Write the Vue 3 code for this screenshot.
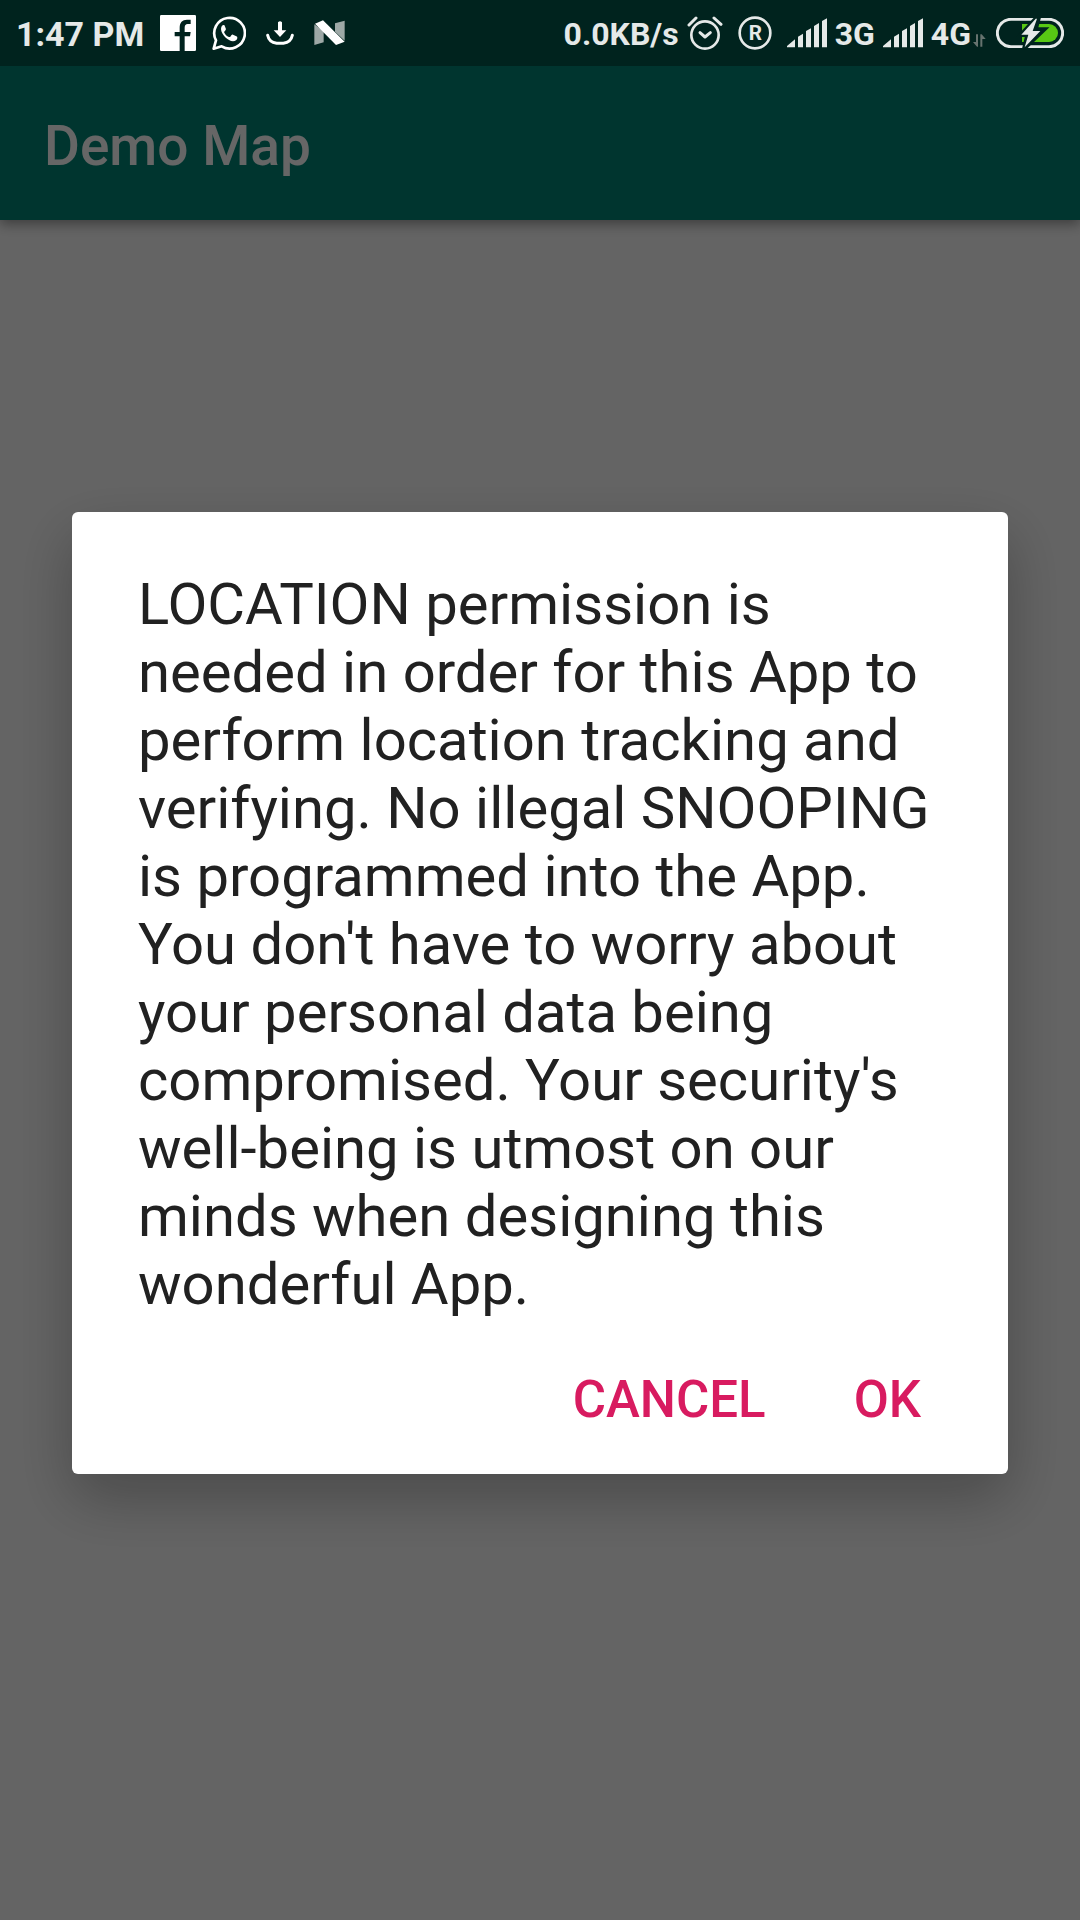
<script setup>
import { ref } from 'vue'

const open = ref(true)
const message =
  "LOCATION permission is needed in order for this App to perform location tracking and verifying. No illegal SNOOPING is programmed into the App. You don't have to worry about your personal data being compromised. Your security's well-being is utmost on our minds when designing this wonderful App."
const networks = [
  { name: '3G', active: false },
  { name: '4G', active: true },
]
</script>

<template>
  <div class="screen">
    <div class="status-bar">
      <div class="status-group notifications">
        <span class="clock">1:47 PM</span>
        <svg class="facebook" width="36" height="36" viewBox="0 0 108 108" aria-label="Facebook">
          <rect width="108" height="108" rx="4" fill="#fff" />
          <path d="M59 108V64H44V51H59V38C59 22 67 14 81 14H92V27H83C77 27 74 31 74 38V51H92L90 64H74V108Z" fill="#00231e" />
        </svg>
        <svg class="whatsapp" width="34" height="34" viewBox="0 0 102 102" aria-label="WhatsApp">
          <path d="M5 98L12 73A46 46 0 1 1 29 91Z" fill="none" stroke="#fff" stroke-width="8" stroke-linejoin="round" />
          <path d="M35 27C31 27 27 32 27 39C28 56 48 75 63 76C70 76 76 71 76 66C76 63 75 62 73 61L63 56C61 55 60 56 58 58L55 62C53 64 51 63 49 62C43 59 39 54 37 50C36 48 37 47 38 46L41 42C42 40 42 39 41 37L38 29C37 27 36 27 35 27Z" fill="#fff" />
        </svg>
        <svg class="download" width="28" height="26" viewBox="0 0 84 78" aria-label="Download">
          <path d="M36 7Q42 0 48 7V31H61L42 51L23 31H36Z" fill="#fff" />
          <path d="M5 46Q9 67 32 70H52Q75 67 79 46" fill="none" stroke="#fff" stroke-width="9" stroke-linecap="round" />
        </svg>
        <svg class="nougat" width="31" height="26" viewBox="0 0 93 78" aria-label="Android N">
          <path d="M1 13L29 34V67L1 75Z M63 10L92 2V62L63 35Z" fill="#9da8a6" />
          <path d="M3 11L27 1L92 65L66 75Z" fill="#fff" />
        </svg>
      </div>

      <div class="status-group system">
        <span class="speed">0.0KB/s</span>
        <svg class="alarm" width="36" height="36" viewBox="0 0 108 108" aria-label="Alarm">
          <g fill="none" stroke="#e5e9e8" stroke-linecap="round" stroke-linejoin="round">
            <circle cx="54" cy="60" r="41" stroke-width="8" />
            <path d="M39 53L54 66L70 53" stroke-width="9" />
            <path d="M6 30L27 9M81 9L102 28" stroke-width="9" />
          </g>
        </svg>
        <svg class="registered" width="34" height="34" viewBox="0 0 102 102" aria-label="Roaming">
          <circle cx="51" cy="51" r="46" fill="none" stroke="#e5e9e8" stroke-width="8" />
          <text x="52" y="73" text-anchor="middle" font-size="62" font-weight="700" fill="#e5e9e8">R</text>
        </svg>
        <template v-for="network in networks" :key="network.name">
          <svg class="signal" width="40" height="30" viewBox="0 0 120 90" aria-label="Signal">
            <path d="M0 88V84L24 64V88ZM33 88V56L48 47V88ZM57 88V39L72 31V88ZM81 88V24L96 15V88ZM105 88V9L120 1V88Z" fill="#e5e9e8" />
          </svg>
          <span class="network">{{ network.name }}</span>
          <svg v-if="network.active" class="traffic" width="13" height="13" viewBox="0 0 39 39" aria-label="Data">
            <path d="M9 1H15V38H12L0 24H9ZM22 38V1H26L38 15H28V38Z" fill="#66736f" />
          </svg>
        </template>
        <svg class="battery" width="68" height="30" viewBox="0 0 204 90" aria-label="Charging">
          <rect x="4" y="4" width="196" height="82" rx="41" fill="none" stroke="#e5e9e8" stroke-width="9" />
          <path d="M78 18H159A27 27 0 0 1 159 72H78Z" fill="#58c814" />
          <path d="M121 1L76 50H95L86 89L143 35H118L127 1Z" fill="#00231e" stroke="#00231e" stroke-width="14" />
          <path d="M119 2L76 50H97L86 88L133 39H110L123 2Z" fill="#e5e9e8" />
        </svg>
      </div>
    </div>

    <header class="app-bar">
      <h1 class="app-title">Demo Map</h1>
    </header>
    <main class="content"></main>

    <div v-if="open" class="scrim">
      <section class="dialog" role="alertdialog" aria-modal="true" aria-describedby="permission-message">
        <p id="permission-message" class="message">{{ message }}</p>
        <div class="actions">
          <button type="button" class="action" @click="open = false">CANCEL</button>
          <button type="button" class="action" @click="open = false">OK</button>
        </div>
      </section>
    </div>
  </div>
</template>

<style>
body {
  margin: 0;
}
</style>

<style scoped>
.screen {
  display: flex;
  flex-direction: column;
  min-height: 100vh;
  background: #fafafa;
  font-family: Roboto, "Noto Sans", sans-serif;
}

.status-bar {
  position: relative;
  z-index: 2;
  display: flex;
  justify-content: space-between;
  align-items: center;
  height: 66px;
  padding: 0 16px;
  background: #00231e;
  color: #e5e9e8;
  font-weight: 700;
  line-height: 40px;
  white-space: nowrap;
}

.status-group {
  display: flex;
  align-items: center;
}

.status-group svg {
  flex: none;
}

.clock,
.speed,
.network {
  padding-top: 2px;
}

.notifications {
  gap: 16px;
  font-size: 34px;
}

.download,
.nougat {
  margin-left: 4px;
}

.system {
  gap: 8px;
  font-size: 32px;
}

.registered {
  margin: 0 7px;
}

.traffic {
  align-self: flex-end;
  margin: 0 2px 7px -6px;
}

.app-bar {
  position: relative;
  box-sizing: border-box;
  display: flex;
  align-items: center;
  height: 154px;
  padding: 6px 44px 0;
  background: #008577;
  box-shadow: 0 4px 12px rgba(0, 0, 0, 0.4);
}

.app-title {
  margin: 0;
  color: #fff;
  font-size: 55px;
  font-weight: 500;
  line-height: 64px;
}

.content {
  flex: 1;
}

.scrim {
  position: fixed;
  inset: 0;
  z-index: 1;
  display: flex;
  align-items: center;
  padding: 66px 72px 0;
  background: rgba(0, 0, 0, 0.6);
}

.dialog {
  box-sizing: border-box;
  width: 100%;
  padding: 58px 54px 8px 66px;
  border-radius: 6px;
  background: #fff;
  box-shadow: 0 24px 60px rgba(0, 0, 0, 0.27);
}

.message {
  margin: 0 -6px 0 0;
  color: #212121;
  font-size: 58px;
  line-height: 68px;
}

.actions {
  display: flex;
  justify-content: flex-end;
  gap: 22px;
  padding-top: 16px;
}

.action {
  height: 132px;
  padding: 0 33px;
  border: 0;
  background: none;
  color: #d81b60;
  font-family: inherit;
  font-size: 51px;
  font-weight: 500;
  line-height: 60px;
  cursor: pointer;
}
</style>
